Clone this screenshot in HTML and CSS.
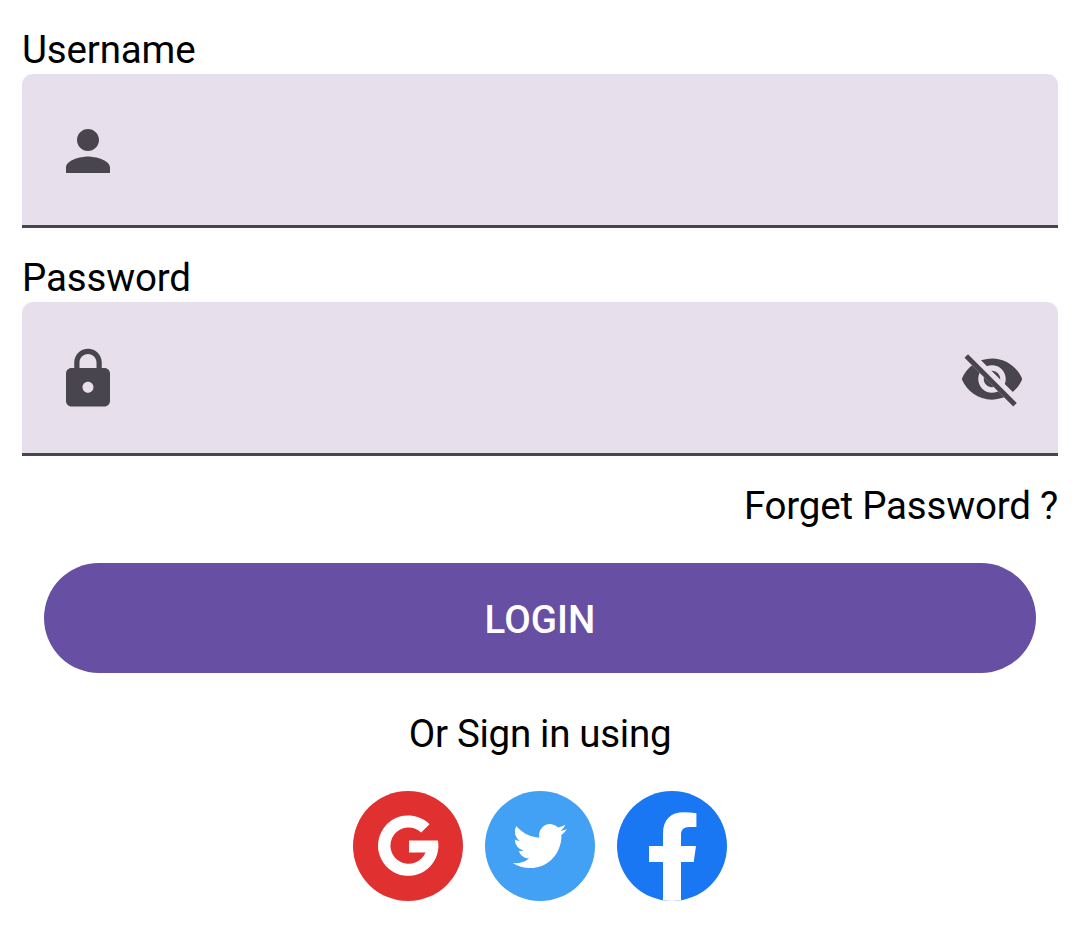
FILE: index.html
```html
<!DOCTYPE html>
<html lang="en">
<head>
<meta charset="utf-8">
<title>Login</title>
<link rel="stylesheet" href="styles.css">
</head>
<body>
<form class="login">
  <label class="label" for="username">Username</label>
  <div class="field">
    <svg class="icon" viewBox="0 0 24 24"><path d="M12 12c2.21 0 4-1.79 4-4s-1.79-4-4-4-4 1.79-4 4 1.79 4 4 4zm0 2c-2.67 0-8 1.34-8 4v2h16v-2c0-2.66-5.33-4-8-4z"/></svg>
    <input class="input" id="username" type="text">
  </div>
  <label class="label" for="password">Password</label>
  <div class="field">
    <svg class="icon" viewBox="0 0 24 24"><path d="M18 8h-1V6c0-2.76-2.24-5-5-5S7 3.240 7 6v2H6c-1.100 0-2 .9-2 2v10c0 1.100.9 2 2 2h12c1.100 0 2-.9 2-2V10c0-1.100-.9-2-2-2zm-6 9c-1.100 0-2-.9-2-2s.9-2 2-2 2 .9 2 2-.9 2-2 2zm3.100-9H8.900V6c0-1.710 1.390-3.100 3.100-3.100s3.100 1.390 3.100 3.100v2z"/></svg>
    <input class="input" id="password" type="password">
    <svg class="icon" viewBox="0 0 24 24">
      <clipPath id="eye-cut"><path d="M2 4.270 19.730 22 22.270 19.460 4.540 1.730V1H23V23H1V4.270z"/></clipPath>
      <path d="M2 4.270 19.730 22 21 20.730 3.270 3z"/>
      <path clip-path="url(#eye-cut)" d="M12 4.500C7 4.500 2.730 7.610 1 12c1.730 4.390 6 7.500 11 7.500s9.270-3.110 11-7.500c-1.730-4.390-6-7.500-11-7.500zM12 17c-2.760 0-5-2.240-5-5s2.240-5 5-5 5 2.240 5 5-2.240 5-5 5zm0-8c-1.660 0-3 1.340-3 3s1.340 3 3 3 3-1.340 3-3-1.340-3-3-3z"/>
    </svg>
  </div>
  <a class="forgot">Forget Password ?</a>
  <button class="submit" type="button">LOGIN</button>
  <p class="alt">Or Sign in using</p>
  <div class="social">
    <svg class="badge" viewBox="0 0 110 110">
      <circle class="google" cx="55" cy="55" r="55"/>
      <path class="mark" d="M76.200 32.900A30.200 30.200 0 1 0 84.700 49.200H55.700V61.200H72.200A18.200 18.200 0 1 1 67.900 41.200z" transform="translate(.3 .3)"/>
    </svg>
    <svg class="badge" viewBox="0 0 110 110">
      <circle class="twitter" cx="55" cy="55" r="55"/>
      <path class="mark" transform="translate(27.700 27.900) scale(2.260)" d="M23.953 4.570a10 10 0 01-2.825.775 4.958 4.958 0 002.163-2.723c-.951.555-2.005.959-3.127 1.184a4.920 4.920 0 00-8.384 4.482C7.690 8.095 4.067 6.130 1.640 3.162a4.822 4.822 0 00-.666 2.475c0 1.710.870 3.213 2.188 4.096a4.904 4.904 0 01-2.228-.616v.060a4.923 4.923 0 003.946 4.827 4.996 4.996 0 01-2.212.085 4.936 4.936 0 004.604 3.417 9.867 9.867 0 01-6.102 2.105c-.390 0-.779-.023-1.170-.067a13.995 13.995 0 007.557 2.209c9.053 0 13.998-7.496 13.998-13.985 0-.210 0-.420-.015-.630A9.935 9.935 0 0024 4.590z"/>
    </svg>
    <svg class="badge" viewBox="0 0 110 110">
      <circle class="facebook" cx="55" cy="55" r="55"/>
      <path class="mark" d="M46 109.300V71H32V55H46V43C46 28.500 53.500 21.300 67 21.300Q73 21.300 79.400 22.300V36H72.500C66.500 36 64 39 64 43.500V55H79L76.700 71H64V109.300Q55 110.700 46 109.300z"/>
    </svg>
  </div>
</form>
</body>
</html>
```
FILE: styles.css
```css
* { box-sizing: border-box; }
body {
  margin: 0;
  background: #fff;
  color: #000;
  font: 400 38.5px/48px Roboto, sans-serif;
}
.login {
  display: flex;
  flex-direction: column;
  padding: 0 22px;
}
.label {
  margin-top: 26px;
  letter-spacing: -0.15px;
}
.field {
  display: flex;
  align-items: center;
  height: 154px;
  padding: 0 33px;
  border-radius: 11px 11px 0 0;
  background: linear-gradient(#e7dfec 151.25px, #49454f 151.25px);
}
.icon {
  flex: none;
  width: 66px;
  height: 66px;
  fill: #49454f;
}
.input {
  flex: 1;
  min-width: 0;
  height: 100%;
  border: 0;
  outline: 0;
  background: transparent;
  font: inherit;
}
.forgot {
  align-self: flex-end;
  margin-top: 26px;
  letter-spacing: -0.2px;
}
.submit {
  height: 110px;
  margin: 33px 22px 0;
  padding: 3px 0 0;
  border: 0;
  border-radius: 55px;
  background: #6750a4;
  color: #fff;
  font: 500 38.5px/48px Roboto, sans-serif;
  letter-spacing: 0.1px;
}
.alt {
  margin: 37px 0 0;
  text-align: center;
  letter-spacing: -0.3px;
}
.social {
  display: flex;
  justify-content: center;
  gap: 22px;
  margin-top: 33px;
}
.badge {
  width: 110px;
  height: 110px;
}
.mark { fill: #fff; }
.google { fill: #e03030; }
.twitter { fill: #42a0f5; }
.facebook { fill: #1977f3; }
```
